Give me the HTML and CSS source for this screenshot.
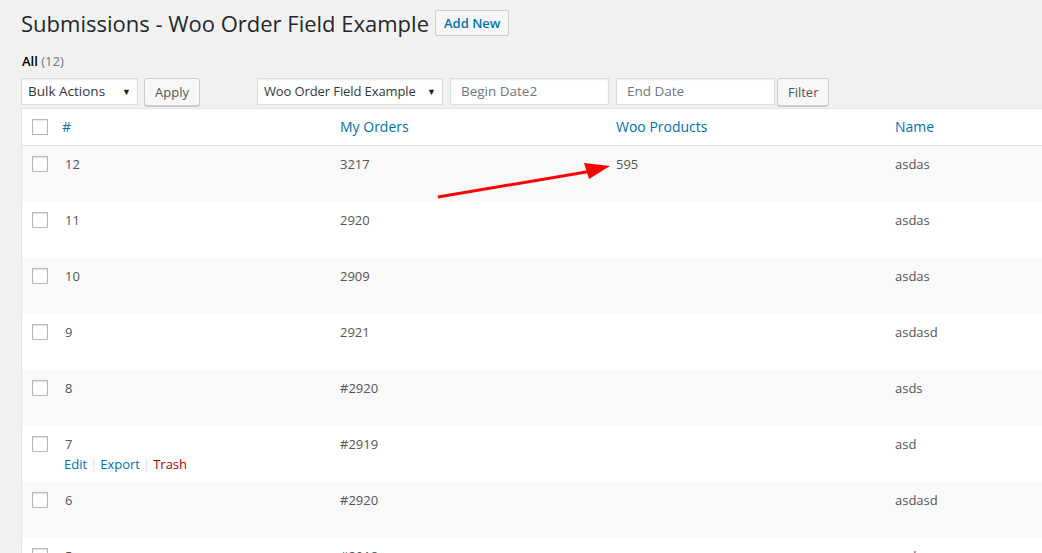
FILE: index.html
```html
<!DOCTYPE html>
<html>
<head>
<meta charset="utf-8">
<link rel="stylesheet" href="styles.css">
</head>
<body>
<div class="wrap">
  <div class="title-row">
    <h1 class="title">Submissions - Woo Order Field Example</h1>
    <a class="btn-add">Add New</a>
  </div>
  <div class="subsubsub"><span class="current">All</span> <span class="count">(12)</span></div>
  <div class="tablenav">
    <div class="select w-bulk">Bulk Actions<span class="caret">▼</span></div>
    <button class="button">Apply</button>
    <div class="select w-form">Woo Order Field Example<span class="caret">▼</span></div>
    <div class="input">Begin Date2</div>
    <div class="input">End Date</div>
    <button class="button btn-filter">Filter</button>
  </div>
  <div class="table">
    <div class="row head">
      <div class="cb"><span class="box"></span></div>
      <div class="c1">#</div>
      <div class="c2">My Orders</div>
      <div class="c3">Woo Products</div>
      <div class="c4">Name</div>
    </div>
    <div class="row alt">
      <div class="cb"><span class="box"></span></div>
      <div class="c1 id">12</div>
      <div class="c2">3217</div>
      <div class="c3">595</div>
      <div class="c4">asdas</div>
    </div>
    <div class="row">
      <div class="cb"><span class="box"></span></div>
      <div class="c1 id">11</div>
      <div class="c2">2920</div>
      <div class="c3"></div>
      <div class="c4">asdas</div>
    </div>
    <div class="row alt">
      <div class="cb"><span class="box"></span></div>
      <div class="c1 id">10</div>
      <div class="c2">2909</div>
      <div class="c3"></div>
      <div class="c4">asdas</div>
    </div>
    <div class="row">
      <div class="cb"><span class="box"></span></div>
      <div class="c1 id">9</div>
      <div class="c2">2921</div>
      <div class="c3"></div>
      <div class="c4">asdasd</div>
    </div>
    <div class="row alt">
      <div class="cb"><span class="box"></span></div>
      <div class="c1 id">8</div>
      <div class="c2">#2920</div>
      <div class="c3"></div>
      <div class="c4">asds</div>
    </div>
    <div class="row">
      <div class="cb"><span class="box"></span></div>
      <div class="c1 id">7
        <div class="actions"><a class="link">Edit</a><span class="sep">|</span><a class="link">Export</a><span class="sep">|</span><a class="trash">Trash</a></div>
      </div>
      <div class="c2">#2919</div>
      <div class="c3"></div>
      <div class="c4">asd</div>
    </div>
    <div class="row alt">
      <div class="cb"><span class="box"></span></div>
      <div class="c1 id">6</div>
      <div class="c2">#2920</div>
      <div class="c3"></div>
      <div class="c4">asdasd</div>
    </div>
    <div class="row">
      <div class="cb"><span class="box"></span></div>
      <div class="c1 id">5</div>
      <div class="c2">#2918</div>
      <div class="c3"></div>
      <div class="c4">asd</div>
    </div>
  </div>
  <svg class="arrow" width="200" height="50" viewBox="0 0 200 50">
    <line x1="6" y1="44" x2="160" y2="18" stroke="#f00" stroke-width="3"/>
    <polygon points="178,13 152,10 157,26" fill="#f00"/>
  </svg>
</div>
</body>
</html>
```

FILE: styles.css
```css
* { box-sizing: border-box; }
html, body { margin: 0; padding: 0; }
body {
  background: #f1f1f1;
  font-family: "Open Sans", "Noto Sans", sans-serif;
  font-size: 13px;
  color: #555;
  width: 1042px;
  height: 553px;
  overflow: hidden;
}
.wrap { position: relative; padding: 9px 0 0 20px; }
.title-row { display: flex; align-items: center; gap: 6px; height: 28px; }
.title {
  margin: 0 0 0 1px;
  font-size: 22px;
  font-weight: 400;
  color: #23282d;
  line-height: 28px;
}
.btn-add {
  display: inline-block;
  height: 26px;
  line-height: 24px;
  padding: 0 8px;
  border: 1px solid #ccc;
  border-radius: 2px;
  background: #f7f7f7;
  color: #0073aa;
  font-size: 13px;
  font-weight: 600;
}
.subsubsub { margin-top: 14px; padding-left: 2px; height: 20px; line-height: 20px; font-size: 13px; }
.current { color: #000; font-weight: 600; }
.count { color: #72777c; }
.tablenav { display: flex; align-items: center; margin-top: 6px; height: 28px; padding-left: 1px; }
.select, .input {
  height: 27px;
  line-height: 25px;
  border: 1px solid #ddd;
  background: #fff;
  box-shadow: inset 0 1px 2px rgba(0,0,0,0.07);
  color: #32373c;
  font-size: 13.5px;
  padding: 0 6px;
  position: relative;
}
.w-form { font-size: 13px; letter-spacing: -0.1px; }
.caret { position: absolute; right: 6px; top: 0; font-size: 9px; color: #222; }
.w-bulk { width: 117px; }
.w-form { width: 186px; margin-left: 57px; }
.input { width: 159px; margin-left: 7px; color: #72777c; padding-left: 10px; font-size: 13.5px; }
.button {
  height: 28px;
  border: 1px solid #ccc;
  border-radius: 3px;
  background: #f7f7f7;
  box-shadow: 0 1px 0 #ccc;
  color: #555;
  font-family: inherit;
  font-size: 13px;
  padding: 0 10px;
  margin-left: 6px;
  margin-top: 1px;
}
.btn-filter { margin-left: 2px; padding: 0 10px; }
.table {
  margin-top: 3px;
  margin-left: 1px;
  background: #fff;
  border-top: 1px solid #e5e5e5;
  border-left: 1px solid #e5e5e5;
  width: 1030px;
}
.row { display: flex; height: 56px; background: #fff; }
.row.alt { background: #f9f9f9; }
.row.head { height: 37px; border-bottom: 1px solid #e1e1e1; }
.row > div { padding: 8px 0 0 0; line-height: 20px; }
.cb { width: 40px; padding-left: 10px !important; }
.row > .cb { padding-top: 10px; }
.row.head > .cb { padding-top: 10px; }
.box {
  display: block;
  width: 16px;
  height: 16px;
  border: 1px solid #b4b9be;
  background: #fff;
  box-shadow: inset 0 1px 2px rgba(0,0,0,0.1);
}
.c1 { width: 278px; }
.c2 { width: 276px; }
.c3 { width: 279px; }
.c4 { flex: 1; }
.head > div { color: #0073aa; font-size: 14px; }
.id { padding-left: 3px !important; }
.actions { font-size: 13px; line-height: 21px; margin-left: -1px; }
.link { color: #0073aa; }
.trash { color: #a00; }
.sep { color: #ddd; margin: 0 3px; }
.arrow { position: absolute; left: 432px; top: 153px; }
```
